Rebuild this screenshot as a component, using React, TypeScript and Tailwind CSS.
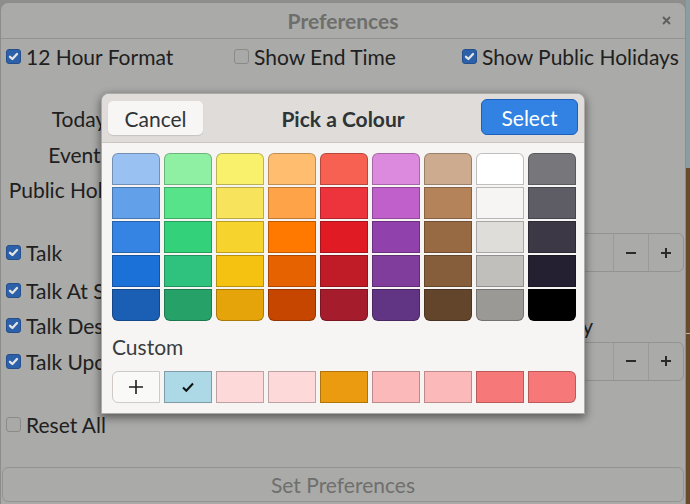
import React from 'react';

const palette: string[][] = [
  ['#99c1f1', '#62a0ea', '#3584e4', '#1c71d8', '#1a5fb4'],
  ['#8ff0a4', '#57e389', '#33d17a', '#2ec27e', '#26a269'],
  ['#f9f06b', '#f8e45c', '#f6d32d', '#f5c211', '#e5a50a'],
  ['#ffbe6f', '#ffa348', '#ff7800', '#e66100', '#c64600'],
  ['#f66151', '#ed333b', '#e01b24', '#c01c28', '#a51d2d'],
  ['#dc8add', '#c061cb', '#9141ac', '#813d9c', '#613583'],
  ['#cdab8f', '#b5835a', '#986a44', '#865e3c', '#63452c'],
  ['#ffffff', '#f6f5f4', '#deddda', '#c0bfbc', '#9a9996'],
  ['#77767b', '#5e5c64', '#3d3846', '#241f31', '#000000'],
];

const customColours = ['#fdd9da', '#fdd9da', '#eb9b10', '#fbb9ba', '#fbb9ba', '#f77878', '#f77878'];

function Check({ checked }: { checked: boolean }) {
  return checked ? (
    <span className="flex h-[15px] w-[15px] shrink-0 items-center justify-center rounded-[3px] border border-[#244f8c] bg-[#2c60a9]">
      <svg width="11" height="11" viewBox="0 0 11 11">
        <path d="M2 5.8 L4.4 8 L9 3" fill="none" stroke="#e4e4e4" strokeWidth="2.3" strokeLinecap="round" strokeLinejoin="round" />
      </svg>
    </span>
  ) : (
    <span className="h-[15px] w-[15px] shrink-0 rounded-[3px] border border-[#8a8a88] bg-[#a9a9a7]" />
  );
}

function CheckRow({ label, checked }: { label: string; checked: boolean }) {
  return (
    <div className="flex items-center gap-[5px] pl-[5px] whitespace-nowrap">
      <Check checked={checked} />
      <span>{label}</span>
    </div>
  );
}

function SpinBox() {
  return (
    <div className="mr-[1px] flex h-[39px] w-[230px] items-stretch rounded-[6px] border border-[#939391]">
      <div className="flex-1" />
      <div className="flex w-[35px] items-center justify-center border-l border-[#9a9a98]">
        <svg width="12" height="12" viewBox="0 0 12 12">
          <path d="M1 6 H11" stroke="#2a2a2a" strokeWidth="2" />
        </svg>
      </div>
      <div className="flex w-[35px] items-center justify-center border-l border-[#9a9a98]">
        <svg width="12" height="12" viewBox="0 0 12 12">
          <path d="M1 6 H11 M6 1 V11" stroke="#2a2a2a" strokeWidth="2" />
        </svg>
      </div>
    </div>
  );
}

function ColourDialog() {
  return (
    <div className="absolute left-[101px] top-[93px] w-[484px] overflow-hidden rounded-t-[8px] border border-black/30 bg-[#f6f5f4] shadow-[0_3px_9px_1px_rgba(0,0,0,0.45)]">
      {/* header */}
      <div className="grid h-[49px] grid-cols-[1fr_auto_1fr] items-center border-b border-[#c9c5c1] bg-[#dfdcd9] px-[6px]">
        <div className="flex">
          <button className="h-[34px] w-[95px] rounded-[5px] bg-[#f7f6f5] text-[#2e3436] shadow-[0_1px_1px_rgba(0,0,0,0.12)]">
            Cancel
          </button>
        </div>
        <div className="font-bold text-[#2e3436]">Pick a Colour</div>
        <div className="flex justify-end">
          <button className="mb-[2px] h-[36px] w-[97px] rounded-[6px] border border-[#1b5fba] bg-[#3182e3] text-white">
            Select
          </button>
        </div>
      </div>

      {/* body */}
      <div className="px-[10px] pb-[10px] pt-[10px]">
        <div className="grid w-[464px] grid-cols-9 gap-x-[4px] gap-y-[2px]">
          {[0, 1, 2, 3, 4].map((r) =>
            palette.map((col, c) => (
              <div
                key={`${r}-${c}`}
                className={`h-[32px] border border-black/25 ${
                  r === 0 ? 'rounded-t-[6px]' : r === 4 ? 'rounded-b-[6px]' : ''
                }`}
                style={{ backgroundColor: col[r] }}
              />
            ))
          )}
        </div>

        <div className="flex h-[50px] items-center text-[#3a3d3e]">Custom</div>

        <div className="grid w-[464px] grid-cols-9 gap-x-[4px]">
          <div className="flex h-[32px] items-center justify-center rounded-l-[6px] border border-[#cfcac6] bg-[#f9f9f8]">
            <svg width="16" height="16" viewBox="0 0 16 16">
              <path d="M1 8 H15 M8 1 V15" stroke="#1e1e1e" strokeWidth="1.6" />
            </svg>
          </div>
          <div className="flex h-[32px] items-center justify-center border border-[#7e9ba6] bg-[#add8e6]">
            <svg width="14" height="14" viewBox="0 0 14 14">
              <path d="M2 7.5 L5.3 10.8 L12 3.5" fill="none" stroke="#111" strokeWidth="2" />
            </svg>
          </div>
          {customColours.map((c, i) => (
            <div
              key={i}
              className={`h-[32px] border border-black/25 ${i === customColours.length - 1 ? 'rounded-r-[6px]' : ''}`}
              style={{ backgroundColor: c }}
            />
          ))}
        </div>
      </div>
    </div>
  );
}

export default function App() {
  return (
    <div
      className="relative flex h-[504px] w-[690px] overflow-hidden bg-[#8e8e8c] text-[21px] leading-none text-[#202020]"
      style={{ fontFamily: 'Lato, "Noto Sans", sans-serif' }}
    >
      {/* preferences window, dimmed behind the modal */}
      <div className="mt-[2px] flex h-[502px] w-[686px] flex-col rounded-t-[8px] border-x border-t border-[#8c8c8a] bg-[#aaaaa8]">
        {/* title bar */}
        <div className="relative flex h-[36px] shrink-0 items-center justify-center border-b border-[#939391] pb-[1px]">
          <span className="font-bold text-[#6e6e6c]">Preferences</span>
          <svg className="absolute right-[14px] top-[13px]" width="9" height="9" viewBox="0 0 9 9">
            <path d="M1 1 L8 8 M8 1 L1 8" stroke="#5e5e5c" strokeWidth="1.8" />
          </svg>
        </div>

        <div className="grid h-[37px] grid-cols-3 items-center pb-[2px]">
          <CheckRow label="12 Hour Format" checked />
          <CheckRow label="Show End Time" checked={false} />
          <CheckRow label="Show Public Holidays" checked />
        </div>

        <div className="h-[24px]" />

        <div className="flex h-[36px] items-center">
          <span className="w-[156px] text-center">Today</span>
        </div>
        <div className="flex h-[36px] items-center">
          <span className="w-[156px] text-center">Events</span>
        </div>
        <div className="flex h-[34px] items-center">
          <span className="w-[156px] whitespace-nowrap text-center">Public Holidays</span>
        </div>

        <div className="h-[27px]" />

        <div className="flex h-[39px] items-center justify-between">
          <CheckRow label="Talk" checked />
          <SpinBox />
        </div>
        <div className="flex h-[36px] items-center">
          <CheckRow label="Talk At Start" checked />
        </div>
        <div className="flex h-[34px] items-center justify-between">
          <CheckRow label="Talk Description" checked />
          <span className="pr-[92px]">Holiday</span>
        </div>
        <div className="flex h-[38px] items-center justify-between">
          <CheckRow label="Talk Upcoming" checked />
          <SpinBox />
        </div>

        <div className="h-[27px]" />

        <div className="flex h-[36px] items-center pb-[2px]">
          <CheckRow label="Reset All" checked={false} />
        </div>

        <div className="h-[24px]" />

        <button className="mx-[1px] h-[35px] shrink-0 rounded-[6px] border border-[#939391] text-[#6f6f6d]">
          Set Preferences
        </button>
      </div>

      {/* desktop behind */}
      <div className="flex flex-1 flex-col">
        <div className="h-[168px] bg-[#8a9da2]" />
        <div className="h-[165px] bg-[#684a2d]" />
        <div className="h-[1px] bg-[#b3b3b1]" />
        <div className="flex-1 bg-[#684a2d]" />
      </div>

      <ColourDialog />
    </div>
  );
}
